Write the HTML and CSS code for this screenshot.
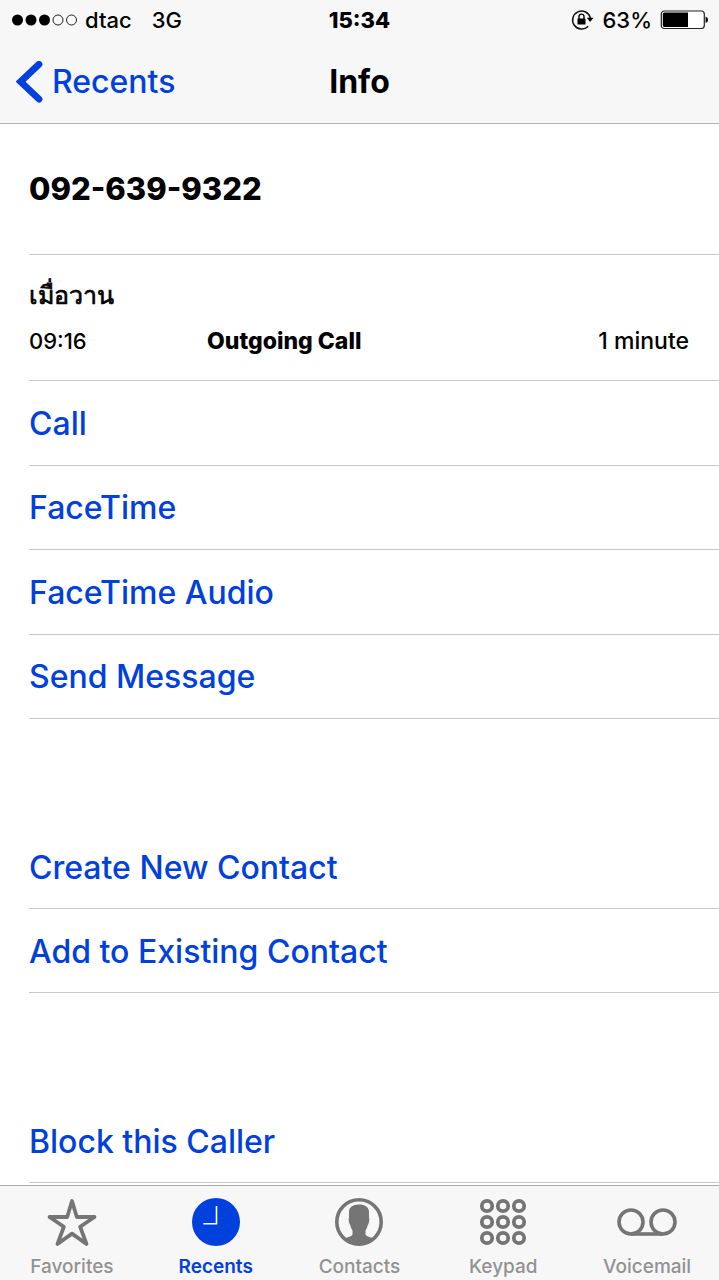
FILE: index.html
```html
<!DOCTYPE html>
<html lang="en">
<head>
<meta charset="utf-8">
<meta name="viewport" content="width=device-width, initial-scale=1">
<title>Info</title>
<link rel="stylesheet" href="styles.css">
</head>
<body>
<header class="top">
  <div class="status">
    <div class="status-left">
      <svg class="signal" width="66" height="12" viewBox="0 0 66 12" aria-hidden="true">
        <g fill="#000"><circle cx="6.500" cy="6" r="5.500"/><circle cx="20" cy="6" r="5.500"/><circle cx="33.500" cy="6" r="5.500"/></g>
        <g fill="none" stroke="#222" stroke-width="1"><circle cx="47" cy="6" r="5"/><circle cx="60.500" cy="6" r="5"/></g>
      </svg>
      <span class="carrier">dtac</span>
      <span>3G</span>
    </div>
    <time class="clock">15:34</time>
    <div class="status-right">
      <svg width="24" height="22" viewBox="0 0 24 22" aria-hidden="true">
        <path d="M17.2 17.2A9 9 0 1 1 19.4 9" fill="none" stroke="#111" stroke-width="1.5"/>
        <path d="M15.8 8.8H22.4L19.1 13Z"/>
        <rect x="6.500" y="9.500" width="8" height="6" rx=".6"/>
        <path d="M8 10V7.600a2.500 2.500 0 0 1 5 0V10" fill="none" stroke="#000" stroke-width="1.400"/>
      </svg>
      <span>63%</span>
      <svg width="48" height="20" viewBox="0 0 48 20" aria-hidden="true">
        <rect x="1.3" y="1" width="43" height="17.5" rx="3" fill="#fff" stroke="#222" stroke-width="1.2"/>
        <path d="M4.5 2.5H28V17H4.5A1.8 1.8 0 0 1 2.8 15.2V4.3A1.8 1.8 0 0 1 4.5 2.5Z"/>
        <path d="M45.6 6.500Q48 7.200 48 9.800T45.600 13.100Z"/>
      </svg>
    </div>
  </div>
  <nav class="navbar">
    <a class="back" href="#recents">
      <svg width="28" height="42" viewBox="0 0 28 42" aria-hidden="true"><path d="M23 3.300 4.600 20.700 23 38.100" fill="none" stroke="#0040dd" stroke-width="6.800" stroke-linecap="round" stroke-linejoin="miter"/></svg>
      Recents
    </a>
    <h1 class="title">Info</h1>
  </nav>
</header>
<main class="content">
  <h2 class="phone">092-639-9322</h2>
  <section class="log">
    <h3 class="day" lang="th">เมื่อวาน</h3>
    <div class="entry">
      <time>09:16</time>
      <strong>Outgoing Call</strong>
      <span>1 minute</span>
    </div>
  </section>
  <div class="actions actions-main">
    <button type="button">Call</button>
    <button type="button">FaceTime</button>
    <button type="button">FaceTime Audio</button>
    <button type="button">Send Message</button>
  </div>
  <div class="actions">
    <button type="button">Create New Contact</button>
    <button type="button">Add to Existing Contact</button>
  </div>
  <div class="actions">
    <button type="button">Block this Caller</button>
  </div>
</main>
<nav class="tabs">
  <a href="#favorites">
    <svg width="52" height="50" viewBox="0 0 52 50" aria-hidden="true"><path d="M26 4 30.800 20H48.500L34.200 29.800 40.500 47 26 36.600 11.500 47 17.800 29.800 3.500 20H21.200Z" fill="none" stroke="#757575" stroke-width="3.800" stroke-linejoin="round"/></svg>
    Favorites
  </a>
  <a class="active" href="#recents" aria-current="page">
    <svg width="50" height="50" viewBox="0 0 50 50" aria-hidden="true"><circle cx="25" cy="25" r="24" fill="#0040dd"/><path d="M25.500 9V26.800H12.300" fill="none" stroke="#fff" stroke-width="1.600"/></svg>
    Recents
  </a>
  <a href="#contacts">
    <svg width="50" height="50" viewBox="0 0 50 50" aria-hidden="true">
      <circle cx="25" cy="25" r="22.200" fill="none" stroke="#757575" stroke-width="3.600"/>
      <path d="M25 7.500C31 7.500 35 10 35 15V20.500Q35.800 21.500 35 25 34.500 27.500 33.800 28 33 31.500 31.500 33.500V37.500Q32 39.500 40.500 41.500 34 48.500 25 48.500T9.500 41.500Q18 39.500 18.500 37.500V33.500Q17 31.500 16.200 28 15.500 27.500 15 25 14.200 21.500 15 20.500V15Q15 7.500 25 7.500Z" fill="#757575"/>
    </svg>
    Contacts
  </a>
  <a href="#keypad">
    <svg width="50" height="50" viewBox="0 0 50 50" aria-hidden="true"><g fill="none" stroke="#757575" stroke-width="3.800"><circle cx="9" cy="9" r="5.200"/><circle cx="25" cy="9" r="5.200"/><circle cx="41" cy="9" r="5.200"/><circle cx="9" cy="25" r="5.200"/><circle cx="25" cy="25" r="5.200"/><circle cx="41" cy="25" r="5.200"/><circle cx="9" cy="41" r="5.200"/><circle cx="25" cy="41" r="5.200"/><circle cx="41" cy="41" r="5.200"/></g></svg>
    Keypad
  </a>
  <a href="#voicemail">
    <svg width="62" height="50" viewBox="0 0 62 50" aria-hidden="true"><g fill="none" stroke="#757575" stroke-width="3.600"><circle cx="15" cy="25" r="12"/><circle cx="47" cy="25" r="12"/><path d="M15 37H47"/></g></svg>
    Voicemail
  </a>
</nav>
</body>
</html>
```
FILE: styles.css
```css
* { box-sizing: border-box; }
body {
  margin: 0;
  min-height: 100vh;
  display: flex;
  flex-direction: column;
  background: #fff;
  color: #000;
  font-family: Inter, "Liberation Sans", Arial, sans-serif;
  font-size: 22px;
  font-weight: 500;
  line-height: 28px;
}
h1, h2, h3 { margin: 0; }
svg { display: block; flex: none; }
a { text-decoration: none; }

.top {
  background: #f7f7f7;
  border-bottom: 1px solid #b2b2b2;
}
.status {
  display: grid;
  grid-template-columns: 1fr auto 1fr;
  align-items: center;
  height: 40px;
  padding: 0 11px;
}
.status-left, .status-right { display: flex; align-items: center; }
.status-left { gap: 20px; }
.signal { margin-right: -12px; }
.status-right { justify-content: flex-end; gap: 8px; }
.clock { font-weight: 800; }
.navbar {
  display: grid;
  grid-template-columns: 1fr auto 1fr;
  align-items: center;
  height: 83px;
  padding: 0 16px;
  font-size: 32px;
  line-height: 38px;
}
.back {
  display: flex;
  align-items: center;
  gap: 8px;
  color: #0040dd;
}
.title { font-size: 32px; }

.content { flex: 1; padding-left: 29px; }
.phone {
  display: flex;
  align-items: center;
  height: 131px;
  border-bottom: 1px solid #c8c8c8;
  font-size: 31px;
  font-weight: 800;
  line-height: 40px;
}
.log {
  display: flex;
  flex-direction: column;
  justify-content: center;
  gap: 18px;
  height: 126px;
  padding-right: 30px;
  border-bottom: 1px solid #c8c8c8;
}
.day { font-size: 25px; font-weight: normal; -webkit-text-stroke: 0.7px currentColor; }
.entry {
  display: grid;
  grid-template-columns: 178px 1fr auto;
  align-items: center;
}
.entry strong, .entry span { font-size: 23px; }
.entry strong { font-weight: 800; }
.actions { display: grid; grid-auto-rows: 84px; }
.actions + .actions { margin-top: 106px; }
.actions-main { min-height: 338px; grid-auto-rows: 1fr; }
.actions button {
  padding: 2px 0 0;
  border: 0;
  border-bottom: 1px solid #c8c8c8;
  background: none;
  color: #0040dd;
  font: inherit;
  font-size: 32px;
  line-height: 38px;
  text-align: left;
}

.tabs {
  display: grid;
  grid-template-columns: repeat(5, 1fr);
  height: 95px;
  padding-top: 11px;
  border-top: 1px solid #a8a8a8;
  background: #f7f7f7;
  font-size: 19px;
  line-height: 24px;
}
.tabs a {
  display: flex;
  flex-direction: column;
  align-items: center;
  gap: 8px;
  color: #929292;
}
.tabs .active { color: #0040dd; font-weight: 600; }
```
